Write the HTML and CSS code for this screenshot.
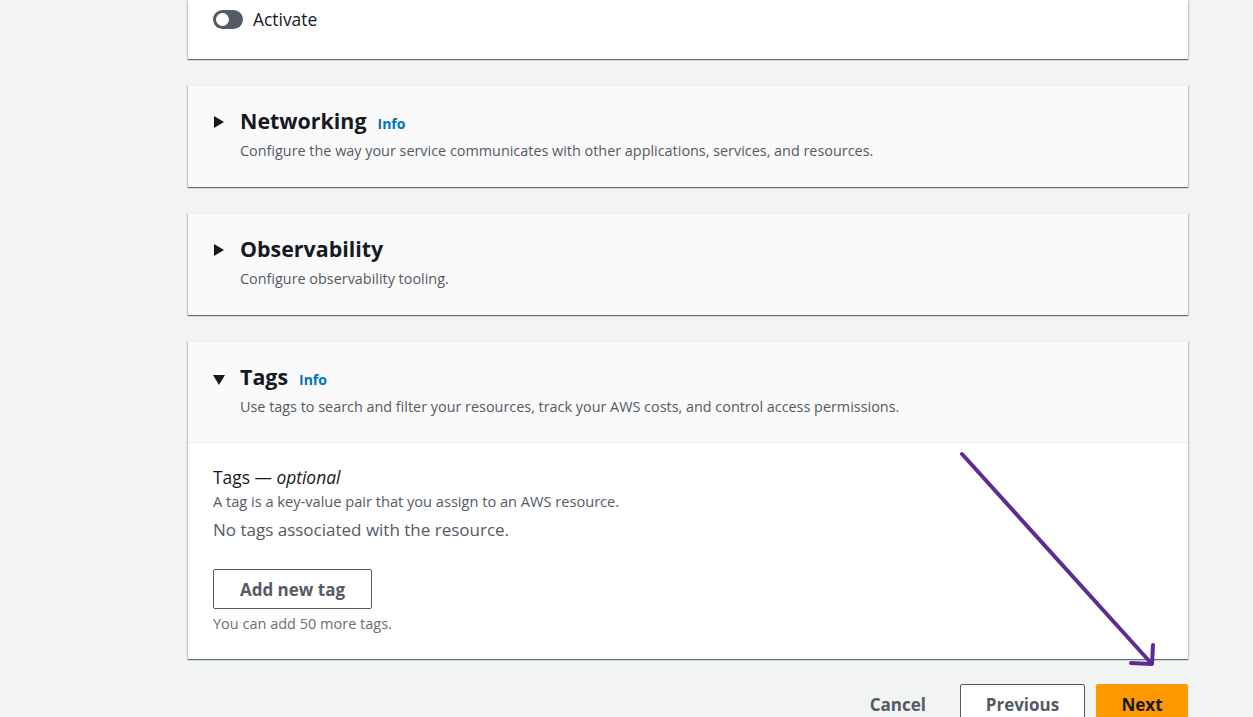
FILE: index.html
```html
<!DOCTYPE html>
<html>
<head>
<meta charset="utf-8">
<link rel="stylesheet" href="styles.css">
</head>
<body>
<div class="page">
  <div class="stack">
    <section class="card card-top">
      <div class="toggle-row">
        <span class="toggle"><span class="knob"></span></span>
        <span class="toggle-label">Activate</span>
      </div>
    </section>

    <section class="card">
      <div class="card-head">
        <span class="caret caret-right"></span>
        <div class="head-text">
          <div class="title-row"><h2 class="title">Networking</h2><a class="info">Info</a></div>
          <p class="desc">Configure the way your service communicates with other applications, services, and resources.</p>
        </div>
      </div>
    </section>

    <section class="card">
      <div class="card-head">
        <span class="caret caret-right"></span>
        <div class="head-text">
          <div class="title-row"><h2 class="title">Observability</h2></div>
          <p class="desc">Configure observability tooling.</p>
        </div>
      </div>
    </section>

    <section class="card">
      <div class="card-head card-head-open">
        <span class="caret caret-down"></span>
        <div class="head-text">
          <div class="title-row"><h2 class="title">Tags</h2><a class="info">Info</a></div>
          <p class="desc">Use tags to search and filter your resources, track your AWS costs, and control access permissions.</p>
        </div>
      </div>
      <div class="card-body">
        <div class="field-label">Tags — <i>optional</i></div>
        <div class="field-desc">A tag is a key-value pair that you assign to an AWS resource.</div>
        <div class="empty">No tags associated with the resource.</div>
        <button class="btn btn-normal">Add new tag</button>
        <div class="hint">You can add 50 more tags.</div>
      </div>
    </section>
  </div>

  <div class="actions">
    <button class="btn btn-link">Cancel</button>
    <button class="btn btn-normal btn-prev">Previous</button>
    <button class="btn btn-primary">Next</button>
  </div>

  <svg class="arrow" width="1253" height="717" viewBox="0 0 1253 717">
    <path d="M962 454 L1151 663" />
    <path d="M1153 645 L1152 664 L1131 663" />
  </svg>
</div>
</body>
</html>
```

FILE: styles.css
```css
* { box-sizing: border-box; }
html, body {
  margin: 0;
  padding: 0;
  background: #f2f3f3;
  font-family: "Open Sans", "Noto Sans", Arial, sans-serif;
  color: #16191f;
}
.page {
  position: relative;
  width: 1253px;
  height: 717px;
  overflow: hidden;
  padding-left: 188px;
}
.stack {
  width: 1000px;
  display: flex;
  flex-direction: column;
  gap: 26px;
}
.card {
  background: #ffffff;
  border-top: 1px solid #eaeded;
  box-shadow: 0 1px 1px 0 rgba(0,28,36,0.45), 1px 1px 1px 0 rgba(0,28,36,0.15), -1px 1px 1px 0 rgba(0,28,36,0.15);
}
.card-top {
  border-top: none;
  height: 59px;
  padding: 8px 25px 0;
}
.toggle-row {
  display: flex;
  align-items: center;
  gap: 10px;
  height: 22px;
}
.toggle {
  width: 30px;
  height: 19px;
  border-radius: 10px;
  background: #545b64;
  display: flex;
  align-items: center;
  padding-left: 3px;
}
.knob {
  width: 13px;
  height: 13px;
  border-radius: 50%;
  background: #ffffff;
}
.toggle-label {
  font-size: 17.4px;
  color: #16191f;
}
.card-head {
  background: #fafafa;
  height: 101px;
  display: flex;
  align-items: flex-start;
  padding: 21px 25px 0 26px;
}
.card-head-open {
  border-bottom: 1px solid #eaeded;
}
.caret {
  width: 0;
  height: 0;
  flex: none;
}
.caret-right {
  border-top: 6.5px solid transparent;
  border-bottom: 6.5px solid transparent;
  border-left: 10px solid #16191f;
  margin-top: 9px;
  margin-right: 16px;
}
.caret-down {
  border-left: 6.5px solid transparent;
  border-right: 6.5px solid transparent;
  border-top: 10px solid #16191f;
  margin-left: -1px;
  margin-right: 15px;
  margin-top: 12px;
}
.head-text { display: flex; flex-direction: column; }
.title-row {
  display: flex;
  align-items: baseline;
  gap: 11px;
}
.title {
  margin: 0;
  font-size: 21.4px;
  font-weight: 700;
  line-height: 28px;
  color: #16191f;
}
.info {
  font-size: 14px;
  font-weight: 700;
  color: #0073bb;
}
.desc {
  margin: 6px 0 0;
  font-size: 14.4px;
  line-height: 20px;
  color: #545b64;
}
.card-body {
  padding: 22px 25px 26px;
  height: 216px;
}
.field-label {
  font-size: 17.4px;
  line-height: 24px;
  color: #16191f;
}
.field-desc {
  font-size: 14.6px;
  line-height: 22px;
  color: #545b64;
  margin-top: 1px;
}
.empty {
  font-size: 17px;
  line-height: 24px;
  color: #545b64;
  margin-top: 6px;
}
.btn {
  font-family: "Open Sans", "Noto Sans", Arial, sans-serif;
  font-weight: 700;
  font-size: 17px;
  border-radius: 2px;
  cursor: pointer;
}
.btn-normal {
  background: #ffffff;
  color: #545b64;
  border: 1px solid #545b64;
  height: 40px;
  padding: 0 20px;
}
.card-body .btn-normal {
  margin-top: 27px;
  width: 159px;
  display: block;
}
.hint {
  font-size: 14.5px;
  line-height: 20px;
  color: #687078;
  margin-top: 5px;
}
.actions {
  width: 1000px;
  display: flex;
  justify-content: flex-end;
  align-items: flex-start;
  gap: 11px;
  margin-top: 25px;
}
.btn-link {
  background: transparent;
  border: 1px solid transparent;
  color: #545b64;
  height: 40px;
  padding: 0 22px 0 20px;
}
.btn-prev {
  width: 125px;
  padding: 0;
}
.btn-primary {
  background: #ff9900;
  color: #16191f;
  border: 1px solid #ff9900;
  height: 40px;
  width: 92px;
  padding: 0;
}
.arrow {
  position: absolute;
  left: 0;
  top: 0;
  pointer-events: none;
}
.arrow path {
  fill: none;
  stroke: #5b2d91;
  stroke-width: 4;
  stroke-linecap: round;
  stroke-linejoin: round;
}
```
